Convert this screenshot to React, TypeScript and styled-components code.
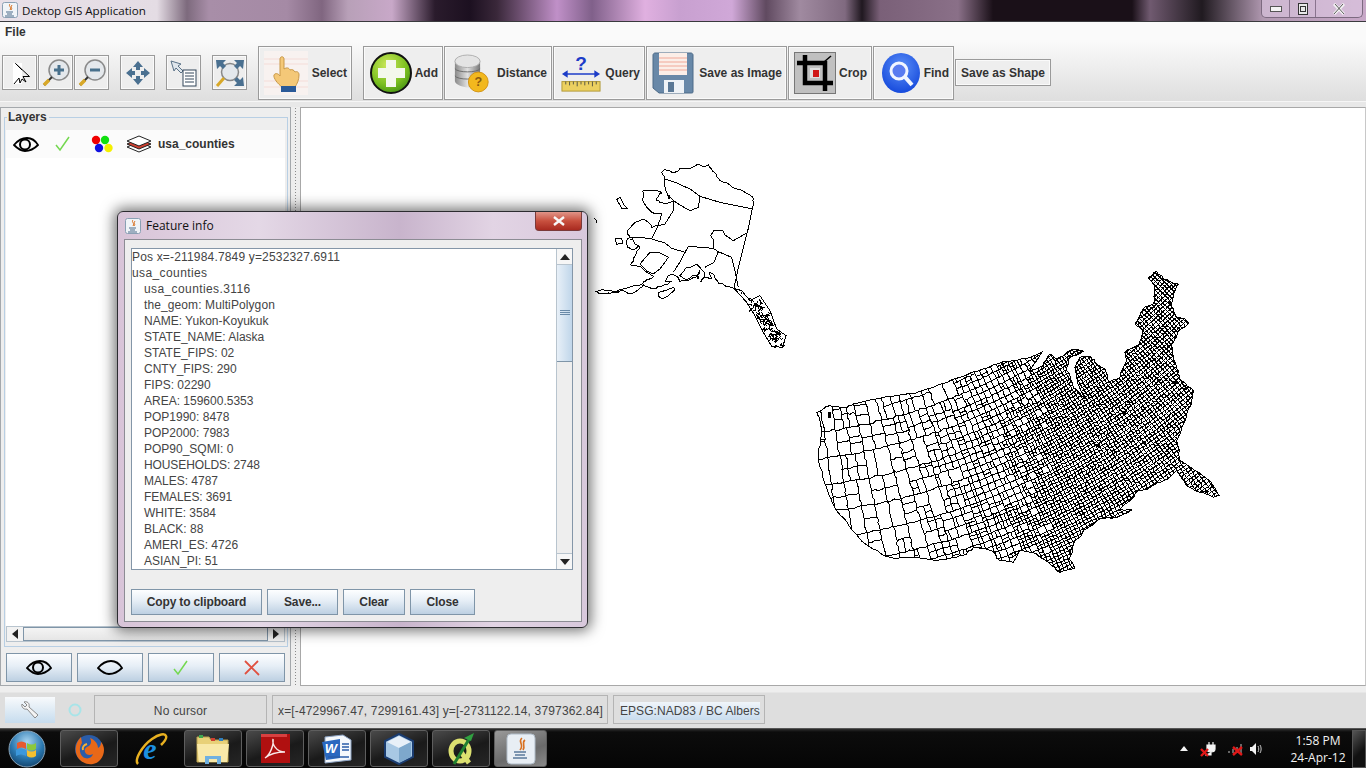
import React from 'react'
import styled, { createGlobalStyle } from 'styled-components'

const GlobalStyle = createGlobalStyle`
  html, body {
    margin: 0;
    padding: 0;
    width: 1366px;
    height: 768px;
    overflow: hidden;
    background: #eeeeee;
  }
  * {
    box-sizing: border-box;
  }
`

const uiFont = `'Liberation Sans', Arial, sans-serif`
const winFont = `'Open Sans', 'Noto Sans', sans-serif`

const Desktop = styled.div`
  position: relative;
  width: 1366px;
  height: 768px;
  display: flex;
  flex-direction: column;
  font-family: ${uiFont};
  color: #333333;
  overflow: hidden;
`

const TitleBar = styled.div`
  height: 22px;
  flex: none;
  display: flex;
  align-items: center;
  padding: 0 3px 1px 2px;
  border-bottom: 1px solid #3a3a3e;
  background: linear-gradient(90deg, #e8e0e8 0, #e4dce4 157px, #7d6a7d 187px, #a88ea8 209px, #a58aa5 287px, #806680 322px,
    #b8a0b8 348px, #c8a8c8 392px, #2a1b2c 435px, #1c1020 470px, #3a283a 497px, #c090c8 557px, #80608a 592px, #e0b0e0 645px,
    #c8a0d0 680px, #d0a8d8 732px, #604a60 766px, #a08aa0 800px, #806a80 845px, #201820 862px, #7a6078 880px, #8a7088 958px,
    #1a1018 993px, #1a1018 1132px, #705a70 1150px, #201a20 1202px, #b098b0 1263px, #c8a8c8 1366px);
`

const TitleText = styled.span`
  font-family: ${winFont};
  font-size: 11.6px;
  color: #111111;
  margin-left: 4px;
  flex: 1;
`

const WindowButtons = styled.div`
  display: flex;
  align-self: flex-start;
  height: 18px;
  border: 1px solid #7c6a80;
  border-top: none;
  border-radius: 0 0 5px 5px;
  background: rgba(225, 205, 232, 0.55);
`

const WindowButton = styled.div<{ $w: number }>`
  width: ${p => p.$w}px;
  display: flex;
  align-items: center;
  justify-content: center;
  color: #f4f4f4;
  & + & {
    border-left: 1px solid rgba(90, 70, 95, 0.6);
  }
`

const MenuBar = styled.div`
  height: 19px;
  flex: none;
  padding: 3px 5px;
  font-size: 12px;
  font-weight: bold;
  background: #fafafa;
`

const ToolBar = styled.div`
  height: 61px;
  flex: none;
  display: flex;
  align-items: center;
  padding: 4px 0 1px 2px;
  background: linear-gradient(180deg, #fafafa 0%, #dedede 100%);
  border-bottom: 1px solid #f6f6f6;
`

const ToolGroup = styled.div<{ $gap?: number }>`
  display: flex;
  align-items: center;
  gap: 1px;
  margin-right: ${p => p.$gap ?? 0}px;
`

const SmallTool = styled.div`
  width: 35px;
  height: 35px;
  display: flex;
  align-items: center;
  justify-content: center;
  background: #eeeeee;
  border: 1px solid #9a9a9a;
  box-shadow: inset 0 0 0 1px #fafafa;
`

const BigTool = styled.div<{ $w: number; $pad: number }>`
  width: ${p => p.$w}px;
  height: 54px;
  display: flex;
  align-items: center;
  justify-content: space-between;
  padding: 1px 4px 0 ${p => p.$pad}px;
  font-size: 12px;
  font-weight: bold;
  background: #eeeeee;
  border: 1px solid #9a9a9a;
  box-shadow: inset 0 0 0 1px #fafafa;
  white-space: nowrap;
`

const TextTool = styled.div`
  width: 96px;
  height: 27px;
  display: flex;
  align-items: center;
  justify-content: center;
  padding-top: 1px;
  font-size: 12px;
  font-weight: bold;
  background: #eeeeee;
  border: 1px solid #9a9a9a;
  box-shadow: inset 0 0 0 1px #fafafa;
`

const Divider = styled.div`
  height: 5px;
  flex: none;
  background: #e8e8e8;
`

const Workspace = styled.div`
  height: 579px;
  flex: none;
  display: flex;
  background: #eeeeee;
`

const LeftPanel = styled.div`
  width: 291px;
  flex: none;
  display: flex;
  flex-direction: column;
  padding: 9px 2px 0 3px;
  border: 1px solid #a4a8ac;
`

const LayersBox = styled.div`
  position: relative;
  height: 530px;
  flex: none;
  padding: 12px 2px 4px 1px;
  display: flex;
  flex-direction: column;
  border: 1px solid #b8cfe4;
`

const LayersLegend = styled.div`
  position: absolute;
  left: 2px;
  top: -8px;
  padding: 0 2px 0 1px;
  font-size: 12px;
  font-weight: bold;
  line-height: 14px;
  background: #eeeeee;
`

const LayerList = styled.div`
  flex: 1;
  background: #ffffff;
`

const LayerRow = styled.div`
  height: 28px;
  display: flex;
  align-items: center;
  padding-left: 7px;
  font-size: 12px;
  font-weight: bold;
  background: #fbfbfb;
`

const LayerCell = styled.div<{ $w: number }>`
  width: ${p => p.$w}px;
  display: flex;
  justify-content: flex-start;
`

const HScroll = styled.div`
  height: 16px;
  flex: none;
  display: flex;
  background: #eeeeee;
  border: 1px solid #b8c4ce;
`

const ScrollEnd = styled.div`
  width: 16px;
  display: flex;
  align-items: center;
  justify-content: center;
  background: #f2f2f2;
`

const HThumb = styled.div`
  flex: 1;
  background: linear-gradient(180deg, #f4f4f4, #e6e6e6);
  border: 1px solid #7f95a8;
`

const LayerButtons = styled.div`
  display: flex;
  gap: 5px;
  padding: 6px 0 0 2px;
`

const LayerButton = styled.div`
  width: 66px;
  height: 29px;
  display: flex;
  align-items: center;
  justify-content: center;
  border: 1px solid #7f95a8;
  background: linear-gradient(180deg, #fdfeff 0%, #e6eef6 45%, #bdd0e2 100%);
`

const Grip = styled.div`
  width: 8px;
  flex: none;
  background-image: radial-gradient(circle, #8a8a8a 0.8px, transparent 0.9px);
  background-size: 3px 3px;
  background-clip: content-box;
  padding: 0 1px 0 2px;
`

const MapPanel = styled.div`
  flex: 1;
  margin-left: 1px;
  background: #ffffff;
  border: 1px solid #a8a8a8;
  border-right: 1px solid #c8c8c8;
`

const MapCanvas = styled.svg`
  display: block;
  width: 100%;
  height: 100%;
`

const StatusBar = styled.div`
  height: 42px;
  flex: none;
  display: flex;
  align-items: flex-start;
  padding: 9px 0 0 5px;
  background: linear-gradient(180deg, #eeeeee 0, #eeeeee 6px, #dedede 7px);
  font-size: 12px;
`

const WrenchButton = styled.div`
  width: 50px;
  height: 26px;
  margin-top: 2px;
  display: flex;
  align-items: center;
  justify-content: center;
  background: linear-gradient(180deg, #f8fafc 0%, #c6dcee 100%);
`

const RingHolder = styled.div`
  width: 39px;
  height: 29px;
  display: flex;
  align-items: center;
  justify-content: center;
`

const StatusBox = styled.div<{ $w: number; $center?: boolean }>`
  width: ${p => p.$w}px;
  height: 29px;
  margin-right: 5px;
  display: flex;
  align-items: center;
  justify-content: ${p => (p.$center ? 'center' : 'flex-start')};
  padding: 2px 5px 0;
  border: 1px solid #fafafa;
  outline: 1px solid #b4b4b4;
  outline-offset: -1px;
  color: #444444;
  white-space: nowrap;
  letter-spacing: 0.15px;
`

const EpsgLabel = styled.span`
  background: linear-gradient(180deg, #f0f5fa, #c8dcee);
  padding: 2px 0;
  margin-left: 1px;
  letter-spacing: 0.05px;
`

const TaskBar = styled.div`
  height: 40px;
  flex: none;
  display: flex;
  align-items: center;
  padding-left: 4px;
  background: linear-gradient(180deg, #2e2e2e 0, #0c0c0c 3px, #050505 100%);
  border-top: 1px solid #555555;
  color: #f0f0f0;
`

const StartOrb = styled.div`
  width: 46px;
  height: 38px;
  margin-right: 10px;
  display: flex;
  align-items: center;
  justify-content: center;
`

const TaskItem = styled.div<{ $active?: boolean; $bare?: boolean; $w?: number }>`
  width: ${p => p.$w ?? 58}px;
  height: 37px;
  flex: none;
  margin-right: 4px;
  display: flex;
  align-items: center;
  justify-content: center;
  border-radius: 3px;
  border: ${p => (p.$bare ? 'none' : '1px solid #5e5e5e')};
  background: ${p =>
    p.$bare
      ? 'transparent'
      : p.$active
        ? 'linear-gradient(160deg, #9a9a9a, #6a6a6a 60%, #8a8a8a)'
        : 'linear-gradient(160deg, #4a4a4a, #1a1a1a 55%, #262626)'};
`

const Tray = styled.div`
  margin-left: auto;
  display: flex;
  align-items: center;
  height: 100%;
`

const TrayIcon = styled.div<{ $w: number }>`
  width: ${p => p.$w}px;
  display: flex;
  align-items: center;
  justify-content: center;
`

const Clock = styled.div`
  width: 66px;
  margin: 0 1px 0 18px;
  text-align: center;
  font-family: ${winFont};
  font-size: 12px;
  line-height: 17px;
  color: #f2f2f2;
  white-space: nowrap;
`

const ShowDesktop = styled.div`
  width: 14px;
  height: 38px;
  border: 1px solid #555555;
  background: linear-gradient(135deg, #555555, #111111 60%);
`

/* floating dialog */
const Dialog = styled.div`
  position: absolute;
  left: 117px;
  top: 211px;
  width: 471px;
  height: 417px;
  padding: 0 5px 6px 6px;
  display: flex;
  flex-direction: column;
  border: 1px solid #2c2c30;
  border-radius: 6px;
  background: linear-gradient(90deg, #d8c4d8 0%, #e4d8e6 30%, #c8b4cc 60%, #e2d4e4 80%, #d8c8dc 100%);
  box-shadow: 0 0 14px 3px rgba(0, 0, 0, 0.55);
`

const DialogTitle = styled.div`
  height: 27px;
  flex: none;
  display: flex;
  align-items: center;
  font-family: ${winFont};
  font-size: 12px;
  color: #111111;
  gap: 5px;
  padding-left: 1px;
`

const CloseButton = styled.div`
  position: absolute;
  right: 5px;
  top: 0;
  width: 47px;
  height: 19px;
  display: flex;
  align-items: center;
  justify-content: center;
  border: 1px solid #7a3a3a;
  border-top: none;
  border-radius: 0 0 4px 4px;
  background: linear-gradient(180deg, #e09488 0%, #c8503e 50%, #a82a20 100%);
  color: #ffffff;
`

const DialogBody = styled.div`
  flex: 1;
  display: flex;
  flex-direction: column;
  padding: 8px 8px 6px 6px;
  background: #eeeeee;
  border: 1px solid #8c8c94;
`

const TextArea = styled.div`
  height: 322px;
  flex: none;
  display: flex;
  background: #ffffff;
  border: 1px solid #8496a8;
`

const InfoText = styled.div`
  flex: 1;
  overflow: hidden;
  font-size: 12px;
  line-height: 16px;
  color: #444444;
`

const InfoLine = styled.div<{ $indent?: boolean; $spacing: number }>`
  height: 16px;
  padding-left: ${p => (p.$indent ? 12 : 0)}px;
  letter-spacing: ${p => p.$spacing}px;
  white-space: nowrap;
`

const VScroll = styled.div`
  width: 16px;
  flex: none;
  display: flex;
  flex-direction: column;
  background: #eeeeee;
  border-left: 1px solid #b8c4ce;
`

const VEnd = styled.div`
  height: 16px;
  flex: none;
  display: flex;
  align-items: center;
  justify-content: center;
  background: #f6f6f6;
  border-bottom: 1px solid #b8c4ce;
`

const VEndBottom = styled(VEnd)`
  margin-top: auto;
  border-bottom: none;
  border-top: 1px solid #b8c4ce;
`

const VThumb = styled.div`
  height: 97px;
  flex: none;
  display: flex;
  align-items: center;
  justify-content: center;
  background: linear-gradient(90deg, #e8f0f8, #c0d6ea);
  border-bottom: 1px solid #7f95a8;
`

const DialogButtons = styled.div`
  display: flex;
  gap: 5px;
  margin-top: 19px;
`

const DialogButton = styled.div<{ $w: number }>`
  width: ${p => p.$w}px;
  height: 26px;
  display: flex;
  align-items: center;
  justify-content: center;
  font-size: 12px;
  font-weight: bold;
  letter-spacing: -0.15px;
  color: #333333;
  border: 1px solid #7f95a8;
  background: linear-gradient(180deg, #fdfeff 0%, #e6eef6 45%, #bdd0e2 100%);
`

/* ---- map generation ---- */
function rng(seed: number) {
  let a = seed
  return () => {
    a = (a + 0x6d2b79f5) | 0
    let t = Math.imul(a ^ (a >>> 15), 1 | a)
    t = (t + Math.imul(t ^ (t >>> 7), 61 | t)) ^ t
    return ((t ^ (t >>> 14)) >>> 0) / 4294967296
  }
}

// adds jagged midpoints so that coastlines don't look like straight polygon edges
function roughen(d: string, amp: number, seed: number) {
  const rand = rng(seed)
  return d
    .split('M')
    .filter(Boolean)
    .map(sub => {
      const closed = sub.includes('Z')
      const nums = sub.replace('Z', '').trim().split(/\s+/).map(Number)
      let pts: number[][] = []
      for (let i = 0; i < nums.length; i += 2) pts.push([nums[i], nums[i + 1]])
      if (closed) pts.push(pts[0])
      for (let level = 0; level < 2; level++) {
        const next: number[][] = [pts[0]]
        for (let i = 1; i < pts.length; i++) {
          const [x1, y1] = pts[i - 1]
          const [x2, y2] = pts[i]
          if (Math.hypot(x2 - x1, y2 - y1) > 10) {
            next.push([(x1 + x2) / 2 + (rand() - 0.5) * amp, (y1 + y2) / 2 + (rand() - 0.5) * amp])
          }
          next.push(pts[i])
        }
        pts = next
      }
      return 'M' + pts.map(p => `${p[0].toFixed(0)} ${p[1].toFixed(0)}`).join(' ')
    })
    .join('')
}

const LOWER48 = roughen(
  'M20 445 60 425 100 430 130 420 200 405 290 390 370 370 450 340 520 315 575 295 620 290 660 280 695 265 660 320 700 305 720 270 740 285 770 265 800 255 820 262 775 285 770 320 790 370 825 405 800 340 795 310 810 280 845 280 860 300 885 315 895 355 930 340 950 290 945 265 990 240 1000 200 975 180 1000 135 1030 120 1035 70 1015 40 1040 22 1060 45 1105 60 1090 100 1085 130 1100 160 1125 165 1135 180 1105 200 1085 240 1090 280 1105 320 1115 350 1150 380 1145 420 1120 480 1100 530 1110 590 1165 625 1200 650 1228 695 1210 700 1170 685 1130 665 1100 620 1060 650 1020 670 985 680 960 710 925 740 965 738 920 760 870 765 820 800 790 840 780 880 795 912 750 925 725 905 680 870 630 860 610 895 570 890 545 860 500 850 470 870 430 880 380 890 300 880 240 880 190 855 150 825 120 790 80 740 50 670 30 610 25 570 35 510 30 470Z',
  6,
  11
)

// counties: a lattice fanning out from a pole up and to the left, split into blocks
// that get finer toward the east, with noise so the change of density has no hard edge
function countyLines() {
  const rand = rng(7)
  const POLE_X = -200
  const POLE_Y = -1200
  const COLS = 152
  const ROWS = 96
  const vx: number[][] = []
  const vy: number[][] = []
  for (let i = 0; i <= COLS; i++) {
    vx.push([])
    vy.push([])
    for (let j = 0; j <= ROWS; j++) {
      const th = 0.08 + i * 0.0051
      const r = 1480 + j * 10
      const x = POLE_X + r * Math.sin(th)
      const y = POLE_Y + r * Math.cos(th)
      const amp = x < 450 ? 5 : 3
      vx[i].push(x + (rand() - 0.5) * amp)
      vy[i].push(y + (rand() - 0.5) * amp)
    }
  }
  const parts: string[] = []
  const hLine = (i1: number, i2: number, j: number) => {
    let s = `M${vx[i1][j].toFixed(0)} ${vy[i1][j].toFixed(0)}`
    for (let i = i1 + 1; i <= i2; i++) s += `L${vx[i][j].toFixed(0)} ${vy[i][j].toFixed(0)}`
    parts.push(s)
  }
  const vLine = (i: number, j1: number, j2: number) => {
    let s = `M${vx[i][j1].toFixed(0)} ${vy[i][j1].toFixed(0)}`
    for (let j = j1 + 1; j <= j2; j++) s += `L${vx[i][j].toFixed(0)} ${vy[i][j].toFixed(0)}`
    parts.push(s)
  }
  const split = (i: number, j: number, w: number, h: number) => {
    const cx = vx[Math.min(i + (w >> 1), COLS)][Math.min(j + (h >> 1), ROWS)] + (rand() - 0.5) * 120
    let min = 1
    if (cx < 320) min = 4
    else if (cx < 450) min = 3
    else if (cx < 580) min = 2
    else if (cx < 680) min = rand() < 0.5 ? 1 : 2
    const stop = cx < 320 ? 0.3 : cx < 450 ? 0.15 : 0
    if ((w <= min && h <= min) || (w <= 5 && rand() < stop)) {
      hLine(i, i + w, j)
      vLine(i, j, j + h)
      return
    }
    if (w >= h && w > min) {
      const a = w > 3 && rand() < 0.4 ? Math.max(1, Math.floor(w * (0.3 + rand() * 0.4))) : w >> 1
      split(i, j, a, h)
      split(i + a, j, w - a, h)
    } else {
      const a = h > 3 && rand() < 0.4 ? Math.max(1, Math.floor(h * (0.3 + rand() * 0.4))) : h >> 1
      split(i, j, w, a)
      split(i, j + a, w, h - a)
    }
  }
  for (let i = 0; i < COLS; i += 8) {
    for (let j = 0; j < ROWS; j += 8) split(i, j, 8, 8)
  }
  return parts.join('')
}

const COUNTIES = countyLines()

const ALASKA = [
  roughen(
    'M215 40 225 32 250 42 265 35 270 28 300 30 320 18 345 22 355 18 375 42 388 65 410 72 438 88 465 100 490 118 487 150 432 388 410 382 385 372 370 345 358 340 365 358 345 355 332 370 345 345 330 325 320 315 290 325 270 350 288 362 305 352 325 345 330 335 320 352 300 362 270 368 262 352 245 345 232 352 228 368 245 368 222 378 190 388 160 378 145 392 115 405 100 395 60 403 35 405 18 398 35 392 80 398 115 385 150 378 170 362 190 352 150 322 122 318 135 292 150 262 130 272 112 265 108 248 120 235 112 215 130 195 155 182 175 190 185 205 205 200 215 165 185 160 160 130 158 96 190 95 215 102 200 125 225 135 250 125 232 110 225 85 225 60 215 40Z',
    5,
    3
  ),
  'M225 60 260 72 300 90 330 112 390 130 440 140 487 150',
  'M250 125 270 138 300 155 325 145 330 112',
  'M250 125 250 155 225 195 205 200 185 240 225 252 245 268 285 280 295 262 370 268 385 278 425 295 435 335 445 385',
  'M185 240 150 235 125 235 135 255 150 262',
  'M370 268 372 245 362 230 372 214 398 215 405 228 430 245 470 222',
  'M295 262 268 312 250 340',
  'M385 278 372 310 345 325',
  'M235 295 210 282 180 280 150 315 170 335 190 345 210 330 225 310Z',
  'M80 122 90 115 100 135 112 148 95 148 85 130Z',
  'M75 238 95 240 98 252 80 256Z',
  'M205 400 225 395 250 385 255 392 235 410 218 420 205 412Z',
  'M432 388 455 395 480 425 510 410 540 455 560 510 588 530 578 565 545 562 520 520 495 470 470 430Z',
]

function panhandleLines() {
  const rand = rng(23)
  let d = ''
  for (let n = 0; n < 90; n++) {
    const t = rand()
    const x = 490 + t * 80 + (rand() - 0.5) * 26
    const y = 425 + t * 132 + (rand() - 0.5) * 18
    d += `M${x.toFixed(0)} ${y.toFixed(0)}l${((rand() - 0.5) * 22).toFixed(0)} ${((rand() - 0.5) * 22).toFixed(0)}l${((rand() - 0.5) * 16).toFixed(0)} ${((rand() - 0.5) * 16).toFixed(0)}`
  }
  return d
}

const PANHANDLE = panhandleLines()

const AK_SPOTS = [
  [322, 350, 6, 9],
  [235, 108, 5, 12],
  [452, 400, 5, 5],
  [120, 240, 6, 4],
]

const US_SPOTS = [
  [55, 445, 8, 18],
  [1075, 112, 8, 8],
  [1072, 243, 9, 7],
  [1028, 285, 9, 7],
  [1085, 352, 18, 8],
  [1118, 372, 12, 6],
  [1160, 622, 9, 5],
  [1178, 680, 18, 4],
  [868, 672, 7, 10],
  [778, 855, 6, 16],
  [935, 440, 14, 9],
  [1000, 530, 9, 10],
  [858, 540, 12, 9],
  [1100, 188, 6, 6],
  [1040, 345, 14, 7],
  [950, 410, 10, 8],
]

function CountyMap() {
  return (
    <MapCanvas viewBox="301 109 1064 577" shapeRendering="crispEdges" fill="none" stroke="#000">
      <defs>
        <clipPath id="lower48">
          <path d={LOWER48} />
        </clipPath>
      </defs>
      <path d="M594 219l2 2 1 3" strokeWidth={1} />
      <g transform="translate(590 160) scale(.3333)">
        {ALASKA.map((d, i) => (
          <path key={i} d={d} strokeWidth={1} vectorEffect="non-scaling-stroke" />
        ))}
        <path d={PANHANDLE} strokeWidth={1} vectorEffect="non-scaling-stroke" />
        {AK_SPOTS.map(([x, y, w, h], i) => (
          <rect key={i} x={x} y={y} width={w} height={h} fill="#000" stroke="none" />
        ))}
      </g>
      <g transform="translate(810 265) scale(.3333)">
        <g clipPath="url(#lower48)">
          <path d={COUNTIES} strokeWidth={1} vectorEffect="non-scaling-stroke" />
          {US_SPOTS.map(([x, y, w, h], i) => (
            <rect key={i} x={x} y={y} width={w} height={h} fill="#000" stroke="none" />
          ))}
        </g>
        <path d={LOWER48} strokeWidth={1} vectorEffect="non-scaling-stroke" />
      </g>
    </MapCanvas>
  )
}

/* ---- icons ---- */
const ArrowIcon = () => (
  <svg width="26" height="30" viewBox="0 0 26 30">
    <rect x="6" y="5" width="9" height="21" fill="#fff" />
    <path d="M8.5 5.5 22.5 18.5 16 18.5 19 24 15 21 13 25 12 20 7 26M8.5 5.5 15 12" fill="none" stroke="#000" strokeWidth="1" />
  </svg>
)
const Lens = ({ sign }: { sign: '+' | '-' }) => (
  <svg width="30" height="30" viewBox="0 0 30 30">
    <circle cx="18" cy="12" r="10" fill="#e4e8ec" stroke="#8a8a8a" strokeWidth="1.5" />
    <path d="M11 19 3 27" stroke="#333" strokeWidth="2" />
    <path d="M8 22 3 27" stroke="#d8a828" strokeWidth="3.5" />
    <path d={sign === '+' ? 'M13 12h10M18 7v10' : 'M13 12h10'} stroke="#48708c" strokeWidth="3" />
  </svg>
)
const PanIcon = () => (
  <svg width="26" height="26" viewBox="0 0 26 26" fill="#4a7090">
    <path d="M13 1 18 7H15V10H11V7H8Z" />
    <path d="M13 25 18 19H15V16H11V19H8Z" />
    <path d="M1 13 7 8V11H10V15H7V18Z" />
    <path d="M25 13 19 8V11H16V15H19V18Z" />
  </svg>
)
const InfoIcon = () => (
  <svg width="30" height="30" viewBox="0 0 30 30">
    <path d="M2 3 12 6 9 8 14 13 12 15 7 10 5 13Z" fill="#dfe6ec" stroke="#5a7288" />
    <rect x="14" y="12" width="13" height="16" fill="#fff" stroke="#33465a" />
    <path d="M16 15h9M16 18h9M16 21h9M16 24h9" stroke="#33465a" />
  </svg>
)
const ExtentIcon = () => (
  <svg width="30" height="30" viewBox="0 0 30 30">
    <circle cx="15" cy="14" r="8.5" fill="#e4e8ec" stroke="#888" strokeWidth="1.5" />
    <path d="M9 20 2 28" stroke="#d8a828" strokeWidth="3" />
    <path d="M1 2H11L8 5 11 8 8 11 5 8 2 11Z M29 2H19L22 5 19 8 22 11 25 8 28 11Z M29 28H19L22 25 19 22 22 19 25 22 28 19Z" fill="#4a7090" />
  </svg>
)
const HandIcon = () => (
  <svg width="44" height="44" viewBox="0 0 44 44">
    <rect width="44" height="44" fill="#f8f2f0" />
    <path d="M0 8h44M0 13h44M0 30h44M0 36h44" stroke="#f4dcd8" />
    <path d="M16 8c0-3 4-3 4 0v10c3-2 5-1 6 1 2-1 4 0 5 2 2-1 4 0 4 3 0 5-2 9-4 12H18C14 33 9 27 10 24c1-2 4-2 6 1Z" fill="#f4c878" stroke="#c89848" />
    <rect x="17" y="35" width="15" height="6" fill="#2a5a98" />
  </svg>
)
const AddIcon = () => (
  <svg width="44" height="44" viewBox="0 0 44 44">
    <defs>
      <radialGradient id="addg" cx=".4" cy=".3" r=".8">
        <stop offset="0" stopColor="#cce85a" />
        <stop offset=".6" stopColor="#7cc020" />
        <stop offset="1" stopColor="#3a8a10" />
      </radialGradient>
    </defs>
    <circle cx="22" cy="22" r="20" fill="url(#addg)" stroke="#111" strokeWidth="2" />
    <path d="M17 9H27V17H36V27H27V36H17V27H9V17H17Z" fill="#f4f8ec" />
  </svg>
)
const DbIcon = () => (
  <svg width="36" height="40" viewBox="0 0 40 44">
    <defs>
      <linearGradient id="dbg" x1="0" x2="1">
        <stop offset="0" stopColor="#8a8a8a" />
        <stop offset=".5" stopColor="#e0e0e0" />
        <stop offset="1" stopColor="#777" />
      </linearGradient>
    </defs>
    <path d="M1 9v22c0 4 9 7 14 7s14-3 14-7V9Z" fill="url(#dbg)" />
    <ellipse cx="15" cy="9" rx="14" ry="7" fill="#e4e4e4" stroke="#aaa" />
    <path d="M1 17c2 5 26 5 28 0M1 25c2 5 26 5 28 0" fill="none" stroke="#666" />
    <circle cx="27" cy="32" r="11" fill="#f2b81e" stroke="#d09010" />
    <text x="27" y="37" fontSize="14" fontWeight="bold" textAnchor="middle" fill="#8a5a10" fontFamily="Liberation Sans">?</text>
  </svg>
)
const QueryIcon = () => (
  <svg width="40" height="40" viewBox="0 0 42 40" overflow="visible">
    <text x="21" y="17" fontSize="20" fontWeight="bold" textAnchor="middle" fill="#1c3cc8" fontFamily="Liberation Sans">?</text>
    <path d="M4 21H38" stroke="#1c3cc8" strokeWidth="1.5" />
    <path d="M1 21 7 17V25ZM41 21 35 17V25Z" fill="#1c3cc8" />
    <rect x="1" y="29" width="40" height="10" fill="#ecd060" stroke="#b09838" />
    <path d="M5 29v3M9 29v4M13 29v3M17 29v5M21 29v3M25 29v4M29 29v3M33 29v5M37 29v3" stroke="#554" />
  </svg>
)
const FloppyIcon = () => (
  <svg width="42" height="42" viewBox="0 0 42 42">
    <path d="M1 3C1 2 2 1 3 1H39C40 1 41 2 41 3V40C41 41 40 41 39 41H7L1 36Z" fill="#6888a8" stroke="#4c6a88" />
    <rect x="7" y="1" width="28" height="22" fill="#fbeee8" />
    <path d="M7 6h28M7 10h28M7 14h28M7 18h28" stroke="#f0a898" />
    <rect x="12" y="28" width="20" height="13" fill="#eef2f6" />
    <rect x="16" y="30" width="6" height="10" fill="#5a7896" />
  </svg>
)
const CropIcon = () => (
  <svg width="42" height="42" viewBox="0 0 42 42">
    <rect x=".5" y=".5" width="41" height="41" fill="#c0c0c0" stroke="#777" />
    <path d="M11 3V31H39M3 11H31V39" fill="none" stroke="#000" strokeWidth="4.5" />
    <path d="M30 10 37 4" stroke="#000" strokeWidth="1.5" />
    <rect x="16" y="16" width="10" height="10" fill="#e0e0e0" />
    <rect x="19" y="18" width="6" height="7" fill="#d01818" />
  </svg>
)
const FindIcon = () => (
  <svg width="40" height="42" viewBox="0 0 40 42">
    <defs>
      <radialGradient id="findg" cx=".5" cy=".35" r=".75">
        <stop offset="0" stopColor="#5c90f8" />
        <stop offset="1" stopColor="#0c40d8" />
      </radialGradient>
    </defs>
    <ellipse cx="20" cy="21" rx="19" ry="20" fill="url(#findg)" />
    <circle cx="18" cy="19" r="8" fill="#5a7cf0" stroke="#f2f6ff" strokeWidth="3" />
    <path d="M24 25 31 33" stroke="#f2f6ff" strokeWidth="4" />
  </svg>
)
const EyeIcon = ({ pupil = true, w = 26 }: { pupil?: boolean; w?: number }) => (
  <svg width={w} height="15" viewBox="0 0 26 15" fill="none" stroke="#000">
    <path d="M1 8C6 2 10 1 14 1S22 3 25 8C20 13 16 14 12 14S5 12 1 8Z" strokeWidth="1.8" />
    {pupil && <circle cx="12" cy="7.5" r="5" strokeWidth="2" />}
  </svg>
)
const CheckIcon = () => (
  <svg width="16" height="16" viewBox="0 0 16 16" fill="none" stroke="#74d850" strokeWidth="1.5">
    <path d="M1 9 5 14 14 1" />
  </svg>
)
const CrossIcon = () => (
  <svg width="18" height="16" viewBox="0 0 18 16" fill="none" stroke="#e05040" strokeWidth="1.8">
    <path d="M2 1 16 15M15 1 2 14" />
  </svg>
)
const DotsIcon = () => (
  <svg width="22" height="18" viewBox="0 0 22 18">
    <circle cx="5" cy="5" r="4.2" fill="#f00000" />
    <circle cx="14" cy="5" r="4.2" fill="#10e010" />
    <circle cx="8" cy="13" r="4.2" fill="#1010e0" />
    <circle cx="17.5" cy="13" r="4.2" fill="#f4f000" />
  </svg>
)
const StackIcon = () => (
  <svg width="26" height="18" viewBox="0 0 26 18">
    <path d="M1 12 13 17 25 12 13 7Z" fill="#fff" stroke="#222" />
    <path d="M1 9 13 14 25 9 13 4Z" fill="#d04030" stroke="#222" />
    <path d="M1 6 13 11 25 6 13 1Z" fill="#fff" stroke="#222" />
  </svg>
)
const WrenchIcon = () => (
  <svg width="18" height="18" viewBox="0 0 18 18" fill="#f4f4f4" stroke="#8a8a8a">
    <path d="M1 3 4 6 6 4 3 1C6 0 9 2 8 6L17 14 14 17 6 8C3 9 0 6 1 3Z" />
  </svg>
)
const RingIcon = () => (
  <svg width="14" height="14" viewBox="0 0 14 14" fill="none">
    <circle cx="7" cy="7" r="5.5" stroke="#a8e4e8" strokeWidth="2" />
  </svg>
)
const JavaIcon = ({ size = 16 }: { size?: number }) => (
  <svg width={size} height={size} viewBox="0 0 16 16">
    <rect x=".5" y=".5" width="15" height="15" rx="2" fill="#f0f4f8" stroke="#8aa0b4" />
    <path d="M8 2C6 4 10 5 8 8M10 3C8 5 11 6 9 8" fill="none" stroke="#d87020" />
    <path d="M4 10H11M5 12H10M3 14H12" stroke="#4a6a8a" />
  </svg>
)
const Triangle = ({ dir }: { dir: 'up' | 'down' | 'left' | 'right' }) => {
  const d = { up: 'M0 6 5 0 10 6Z', down: 'M0 0H10L5 6Z', left: 'M6 0V10L0 5Z', right: 'M0 0V10L6 5Z' }[dir]
  const horiz = dir === 'left' || dir === 'right'
  return (
    <svg width={horiz ? 6 : 10} height={horiz ? 10 : 6} viewBox={horiz ? '0 0 6 10' : '0 0 10 6'}>
      <path d={d} fill="#222" />
    </svg>
  )
}
const WinOrb = () => (
  <svg width="38" height="38" viewBox="0 0 38 38">
    <defs>
      <radialGradient id="orb" cx=".5" cy=".3" r=".8">
        <stop offset="0" stopColor="#a8d4f0" />
        <stop offset=".55" stopColor="#2a78b0" />
        <stop offset="1" stopColor="#0c3458" />
      </radialGradient>
    </defs>
    <circle cx="19" cy="19" r="18" fill="url(#orb)" stroke="#8aa4b8" />
    <path d="M9 13c3-2 6-2 9 0v6c-3-2-6-2-9 0Z" fill="#e85a30" />
    <path d="M19 13c3 2 6 2 9 0v6c-3 2-6 2-9 0Z" fill="#8cc83c" />
    <path d="M8 20c3-2 6-2 10 0v6c-4-2-7-2-10 0Z" fill="#3c98dc" />
    <path d="M19 20c3 2 6 2 9 0v6c-3 2-6 2-9 0Z" fill="#f4c030" />
  </svg>
)
const FirefoxIcon = () => (
  <svg width="32" height="32" viewBox="0 0 32 32">
    <circle cx="16" cy="16" r="14" fill="#2a5ca8" />
    <path d="M8 4C3 9 1 16 4 23c3 6 10 9 16 8 6-1 11-7 11-14 0-3-1-6-3-8 0 3-1 5-3 6 0-4-3-8-8-10 2 3 1 6-1 8-3 1-5 3-4 6 1 3 5 4 8 2-1 4-6 6-10 3C6 21 6 14 9 10Z" fill="#e86818" />
    <path d="M14 11c-3 1-5 3-4 6" stroke="#f8b030" strokeWidth="2" fill="none" />
  </svg>
)
const IeIcon = () => (
  <svg width="34" height="34" viewBox="0 0 34 34" overflow="visible">
    <text x="16" y="27" fontSize="30" fontWeight="bold" textAnchor="middle" fill="#1c90e0" fontFamily="Liberation Serif" fontStyle="italic">e</text>
    <path d="M4 32C0 28 8 14 18 7c7-5 13-6 14-3 1 2-2 6-5 9" fill="none" stroke="#e8b020" strokeWidth="2.5" />
  </svg>
)
const FolderIcon = () => (
  <svg width="34" height="32" viewBox="0 0 34 32">
    <path d="M1 4H13L15 7H32V29H1Z" fill="#e8d078" stroke="#b8a050" />
    <rect x="3" y="2" width="4" height="3" fill="#40a850" />
    <rect x="15" y="5" width="4" height="3" fill="#d04030" />
    <rect x="23" y="5" width="4" height="3" fill="#3080c0" />
    <path d="M1 11H33L31 29H3Z" fill="#f8e8a8" />
    <path d="M9 31V23H25V31H21V26H13V31Z" fill="#70b0e0" />
  </svg>
)
const PdfIcon = () => (
  <svg width="32" height="32" viewBox="0 0 32 32">
    <rect x="2" y="1" width="29" height="29" fill="#b01010" />
    <path d="M2 1H28V4H2Z" fill="#d84040" />
    <path d="M6 25C11 22 15 12 14 6c-1 5 3 13 12 13-5 0-14 1-20 6Z" fill="none" stroke="#f8e8e8" strokeWidth="1.4" />
  </svg>
)
const WordIcon = () => (
  <svg width="32" height="30" viewBox="0 0 32 30">
    <path d="M4 3 22 1 30 6V26L4 29Z" fill="#f4f8fc" stroke="#8aa0c0" />
    <path d="M1 8 19 5V24L5 26Z" fill="#2a68c0" />
    <text x="10" y="19" fontSize="13" fontWeight="bold" textAnchor="middle" fill="#fff" fontStyle="italic" fontFamily="Liberation Sans">W</text>
    <path d="M21 10h7M21 13h7M21 16h7M7 23h21" stroke="#2a5ca8" strokeWidth="1.5" />
  </svg>
)
const CubeIcon = () => (
  <svg width="30" height="32" viewBox="0 0 30 32">
    <path d="M15 1 29 8V24L15 31 1 24V8Z" fill="#a8c8e4" stroke="#1a3c70" strokeWidth="2" />
    <path d="M15 3 27 9 15 15 3 9Z" fill="#e8f0f8" />
    <path d="M15 15V30L27 24V9Z" fill="#7ea8cc" />
  </svg>
)
const QgisIcon = () => (
  <svg width="28" height="34" viewBox="0 0 28 34">
    <ellipse cx="13" cy="19" rx="9" ry="10" fill="none" stroke="#dce070" strokeWidth="5" />
    <path d="M14 20 22 31" stroke="#dce070" strokeWidth="5" />
    <path d="M7 32 24 4" stroke="#208030" strokeWidth="3" />
    <path d="M17 6 27 1 24 9Z" fill="#30a040" />
  </svg>
)
const JavaTask = () => (
  <svg width="30" height="32" viewBox="0 0 30 32">
    <rect x="1" y="1" width="28" height="30" rx="4" fill="#e8eef4" stroke="#b0bcc8" />
    <path d="M16 5C11 9 19 11 14 17M19 7C15 10 20 12 17 17" fill="none" stroke="#d87020" strokeWidth="1.6" />
    <path d="M8 19H20M9 22H19M7 25H21" stroke="#5a7a9a" strokeWidth="1.5" />
  </svg>
)
const PlugIcon = () => (
  <svg width="16" height="16" viewBox="0 0 16 16">
    <path d="M7 4H15V8C15 10 13 11 11 11S7 10 7 8ZM9 1V4M13 1V4M11 11V14H5" fill="#f4f4f4" stroke="#f4f4f4" strokeWidth="1.2" />
    <path d="M1 8 8 15M8 8 1 15" stroke="#e01818" strokeWidth="2.4" />
  </svg>
)
const SignalIcon = () => (
  <svg width="18" height="14" viewBox="0 0 18 14">
    <path d="M1 9h2v2H1ZM5 7h2v4H5ZM9 5h2v6H9ZM13 2h2v9h-2Z" fill="#666" />
    <path d="M6 5 15 13M15 5 6 13" stroke="#e01818" strokeWidth="2.4" />
  </svg>
)
const SpeakerIcon = () => (
  <svg width="14" height="14" viewBox="0 0 14 14">
    <path d="M1 5H3L7 1V13L3 9H1Z" fill="#f2f2f2" />
    <path d="M9 4C10 6 10 8 9 10M11 3C12.5 5 12.5 9 11 11" fill="none" stroke="#c8c8c8" />
  </svg>
)

// text, indented, letter spacing (Java's Dialog font sets lowercase wider than Arial metrics)
const INFO: [string, boolean, number][] = [
  ['Pos x=-211984.7849 y=2532327.6911', false, 0.17],
  ['usa_counties', false, 0.4],
  ['usa_counties.3116', true, 0.4],
  ['the_geom: MultiPolygon', true, 0.1],
  ['NAME: Yukon-Koyukuk', true, 0],
  ['STATE_NAME: Alaska', true, 0],
  ['STATE_FIPS: 02', true, 0],
  ['CNTY_FIPS: 290', true, 0],
  ['FIPS: 02290', true, 0],
  ['AREA: 159600.5353', true, 0],
  ['POP1990: 8478', true, 0],
  ['POP2000: 7983', true, 0],
  ['POP90_SQMI: 0', true, 0],
  ['HOUSEHOLDS: 2748', true, -0.1],
  ['MALES: 4787', true, 0],
  ['FEMALES: 3691', true, -0.1],
  ['WHITE: 3584', true, 0],
  ['BLACK: 88', true, 0],
  ['AMERI_ES: 4726', true, 0],
  ['ASIAN_PI: 51', true, 0],
]

export default function App() {
  return (
    <Desktop>
      <GlobalStyle />
      <TitleBar>
        <JavaIcon />
        <TitleText>Dektop GIS Application</TitleText>
        <WindowButtons>
          <WindowButton $w={27}>
            <svg width="12" height="6" viewBox="0 0 12 6"><rect x=".5" y=".5" width="11" height="5" fill="#f4f4f4" stroke="#555" /></svg>
          </WindowButton>
          <WindowButton $w={26}>
            <svg width="11" height="12" viewBox="0 0 11 12" fill="none" stroke="#333"><rect x="1.5" y=".5" width="9" height="11" fill="#e8e8e8" /><rect x="3.5" y="3.5" width="5" height="5" /></svg>
          </WindowButton>
          <WindowButton $w={47}>
            <svg width="12" height="12" viewBox="0 0 12 12" stroke="#333" strokeWidth="1"><path d="M1 1 11 11M11 1 1 11" stroke="#f4f4f4" strokeWidth="3" /><path d="M2 1 11 11M10 1 1 11" strokeWidth=".8" /></svg>
          </WindowButton>
        </WindowButtons>
      </TitleBar>
      <MenuBar>File</MenuBar>
      <ToolBar>
        <ToolGroup $gap={11}>
          <SmallTool><ArrowIcon /></SmallTool>
          <SmallTool><Lens sign="+" /></SmallTool>
          <SmallTool><Lens sign="-" /></SmallTool>
        </ToolGroup>
        <ToolGroup $gap={11}>
          <SmallTool><PanIcon /></SmallTool>
        </ToolGroup>
        <ToolGroup $gap={11}>
          <SmallTool><InfoIcon /></SmallTool>
        </ToolGroup>
        <ToolGroup $gap={11}>
          <SmallTool><ExtentIcon /></SmallTool>
        </ToolGroup>
        <ToolGroup $gap={11}>
          <BigTool $w={94} $pad={5}><HandIcon />Select</BigTool>
        </ToolGroup>
        <ToolGroup>
          <BigTool $w={80} $pad={5}><AddIcon />Add</BigTool>
          <BigTool $w={108} $pad={9}><DbIcon />Distance</BigTool>
          <BigTool $w={92} $pad={7}><QueryIcon />Query</BigTool>
          <BigTool $w={141} $pad={5}><FloppyIcon />Save as Image</BigTool>
          <BigTool $w={84} $pad={5}><CropIcon />Crop</BigTool>
          <BigTool $w={81} $pad={7}><FindIcon />Find</BigTool>
          <TextTool>Save as Shape</TextTool>
        </ToolGroup>
      </ToolBar>
      <Divider />
      <Workspace>
        <LeftPanel>
          <LayersBox>
            <LayersLegend>Layers</LayersLegend>
            <LayerList>
              <LayerRow>
                <LayerCell $w={42}><EyeIcon /></LayerCell>
                <LayerCell $w={36}><CheckIcon /></LayerCell>
                <LayerCell $w={35}><DotsIcon /></LayerCell>
                <LayerCell $w={32}><StackIcon /></LayerCell>
                usa_counties
              </LayerRow>
            </LayerList>
            <HScroll>
              <ScrollEnd><Triangle dir="left" /></ScrollEnd>
              <HThumb />
              <ScrollEnd><Triangle dir="right" /></ScrollEnd>
            </HScroll>
          </LayersBox>
          <LayerButtons>
            <LayerButton><EyeIcon /></LayerButton>
            <LayerButton><EyeIcon pupil={false} /></LayerButton>
            <LayerButton><CheckIcon /></LayerButton>
            <LayerButton><CrossIcon /></LayerButton>
          </LayerButtons>
        </LeftPanel>
        <Grip />
        <MapPanel>
          <CountyMap />
        </MapPanel>
      </Workspace>
      <StatusBar>
        <WrenchButton><WrenchIcon /></WrenchButton>
        <RingHolder><RingIcon /></RingHolder>
        <StatusBox $w={173} $center>No cursor</StatusBox>
        <StatusBox $w={336}>x=[-4729967.47, 7299161.43] y=[-2731122.14, 3797362.84]</StatusBox>
        <StatusBox $w={152}><EpsgLabel>EPSG:NAD83 / BC Albers</EpsgLabel></StatusBox>
      </StatusBar>
      <TaskBar>
        <StartOrb><WinOrb /></StartOrb>
        <TaskItem><FirefoxIcon /></TaskItem>
        <TaskItem $bare><IeIcon /></TaskItem>
        <TaskItem><FolderIcon /></TaskItem>
        <TaskItem><PdfIcon /></TaskItem>
        <TaskItem><WordIcon /></TaskItem>
        <TaskItem><CubeIcon /></TaskItem>
        <TaskItem><QgisIcon /></TaskItem>
        <TaskItem $active $w={53}><JavaTask /></TaskItem>
        <Tray>
          <TrayIcon $w={10}><svg width="8" height="5" viewBox="0 0 8 5"><path d="M0 5 4 0 8 5Z" fill="#f4f4f4" /></svg></TrayIcon>
          <TrayIcon $w={38}><PlugIcon /></TrayIcon>
          <TrayIcon $w={18}><SignalIcon /></TrayIcon>
          <TrayIcon $w={22}><SpeakerIcon /></TrayIcon>
          <Clock>1:58 PM<br />24-Apr-12</Clock>
          <ShowDesktop />
        </Tray>
      </TaskBar>
      <Dialog>
        <DialogTitle>
          <JavaIcon />
          Feature info
        </DialogTitle>
        <CloseButton>
          <svg width="12" height="10" viewBox="0 0 12 10" stroke="#f8f8f8" strokeWidth="2.4"><path d="M1 1 11 9M11 1 1 9" /></svg>
        </CloseButton>
        <DialogBody>
          <TextArea>
            <InfoText>
              {INFO.map(([line, indent, spacing]) => (
                <InfoLine key={line} $indent={indent} $spacing={spacing}>{line}</InfoLine>
              ))}
            </InfoText>
            <VScroll>
              <VEnd><Triangle dir="up" /></VEnd>
              <VThumb>
                <svg width="10" height="6" viewBox="0 0 10 6" stroke="#6a8aa8"><path d="M0 .5H10M0 2.5H10M0 4.5H10" /></svg>
              </VThumb>
              <VEndBottom><Triangle dir="down" /></VEndBottom>
            </VScroll>
          </TextArea>
          <DialogButtons>
            <DialogButton $w={131}>Copy to clipboard</DialogButton>
            <DialogButton $w={71}>Save...</DialogButton>
            <DialogButton $w={62}>Clear</DialogButton>
            <DialogButton $w={65}>Close</DialogButton>
          </DialogButtons>
        </DialogBody>
      </Dialog>
    </Desktop>
  )
}
